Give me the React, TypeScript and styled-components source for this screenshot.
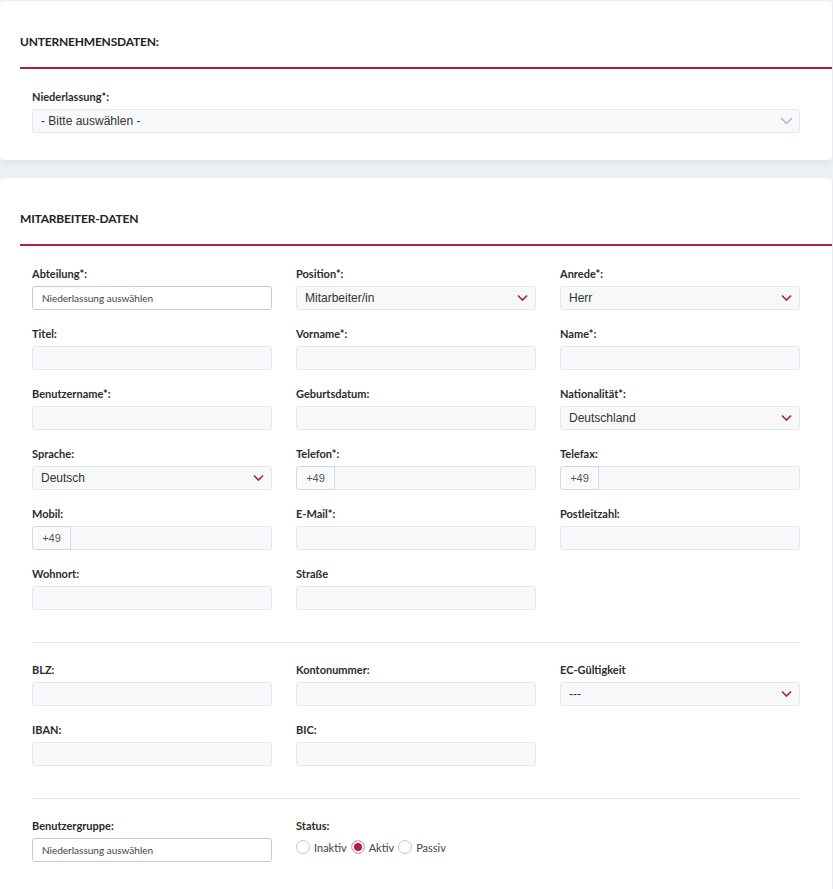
import React from "react";
import styled, { createGlobalStyle } from "styled-components";

const Global = createGlobalStyle`
  html, body {
    margin: 0;
    padding: 0;
    background: #eef1f6;
  }
  body {
    font-family: Lato, "Noto Sans", sans-serif;
    color: #2b2b2b;
  }
  * { box-sizing: border-box; }
`;

const Page = styled.div`
  padding: 1px 1px 0 0;
  display: flex;
  flex-direction: column;
  gap: 18px;
`;

const Card = styled.section<{ $open?: boolean }>`
  background: #fff;
  border-radius: 4px;
  box-shadow: 0 4px 8px rgba(40, 50, 80, 0.07);
  padding-bottom: ${(p) => (p.$open ? "40px" : "27px")};
`;

const Header = styled.header`
  margin-left: 20px;
  padding-top: 33px;
  border-bottom: 2px solid #ad1f47;
  > h2 {
    margin: 0 0 17px;
    font-size: 12px;
    line-height: 16px;
    font-weight: 700;
    letter-spacing: -0.2px;
    color: #222;
  }
`;

const Body = styled.div<{ $top: number }>`
  padding: ${(p) => p.$top}px 32px 0;
`;

const Grid = styled.div<{ $cols: number }>`
  display: grid;
  grid-template-columns: repeat(${(p) => p.$cols}, 1fr);
  column-gap: 24px;
  row-gap: 17px;
`;

const Divider = styled.hr`
  border: none;
  border-top: 1px solid #e3e6ea;
  margin: 32px 0 20px;
`;

const Field = styled.div`
  display: flex;
  flex-direction: column;
  min-width: 0;
`;

const Label = styled.label`
  font-size: 11px;
  line-height: 14px;
  font-weight: 700;
  color: #2b2b2b;
  margin-bottom: 5px;
  white-space: nowrap;
`;

const TextInput = styled.input<{ $plain?: boolean }>`
  height: 24px;
  width: 100%;
  border-radius: 3px;
  border: 1px solid ${(p) => (p.$plain ? "#c6cbd3" : "#e4e7ec")};
  background: ${(p) => (p.$plain ? "#fff" : "#f7f8fa")};
  padding: 0 9px;
  font-family: Lato, "Noto Sans", sans-serif;
  font-size: 10px;
  color: #444;
  outline: none;
  &::placeholder { color: #444; }
`;

const SelectWrap = styled.div`
  position: relative;
  > svg {
    position: absolute;
    top: 50%;
    transform: translateY(-50%);
    pointer-events: none;
  }
`;

const Select = styled.select`
  appearance: none;
  -webkit-appearance: none;
  height: 24px;
  width: 100%;
  border-radius: 3px;
  border: 1px solid #e4e7ec;
  background: #f7f8fa;
  padding: 0 28px 0 8px;
  font-family: "Liberation Sans", Arial, sans-serif;
  font-size: 12px;
  color: #333;
  outline: none;
`;

const Group = styled.div`
  display: flex;
  height: 24px;
`;

const Addon = styled.span`
  flex: 0 0 39px;
  display: flex;
  align-items: center;
  justify-content: center;
  border: 1px solid #d5d9e0;
  border-radius: 3px 0 0 3px;
  background: #f9fafb;
  font-family: "Liberation Sans", Arial, sans-serif;
  font-size: 11px;
  color: #555;
`;

const GroupInput = styled(TextInput)`
  border-left: none;
  border-radius: 0 3px 3px 0;
`;

const Radios = styled.div`
  display: flex;
  align-items: center;
  gap: 4px;
  height: 20px;
  margin-top: -1px;
`;

const Radio = styled.label<{ $on?: boolean }>`
  display: flex;
  align-items: center;
  gap: 4px;
  font-size: 11px;
  color: #444;
  > span {
    width: 14px;
    height: 14px;
    border-radius: 50%;
    border: 1px solid #c3c8d0;
    background: ${(p) => (p.$on ? "#b01e4a" : "#fff")};
    box-shadow: ${(p) => (p.$on ? "inset 0 0 0 2px #fff" : "none")};
  }
`;

const Chevron = ({ red }: { red?: boolean }) =>
  red ? (
    <svg width="11" height="7" viewBox="0 0 11 7" style={{ right: 8 }}>
      <path d="M1 1l4.5 4.5L10 1" fill="none" stroke="#b01e4a" strokeWidth="1.6" />
    </svg>
  ) : (
    <svg width="13" height="8" viewBox="0 0 13 8" style={{ right: 7 }}>
      <path d="M1 1l5.5 5.5L12 1" fill="none" stroke="#a7acb3" strokeWidth="1.1" />
    </svg>
  );

type F =
  | { kind: "text"; label: string }
  | { kind: "plain"; label: string; placeholder: string }
  | { kind: "select"; label: string; value: string }
  | { kind: "phone"; label: string }
  | { kind: "empty" };

const row = (f: F, i: number) => {
  if (f.kind === "empty") return <div key={i} />;
  return (
    <Field key={i}>
      <Label>{f.label}</Label>
      {f.kind === "text" && <TextInput />}
      {f.kind === "plain" && <TextInput $plain placeholder={f.placeholder} />}
      {f.kind === "select" && (
        <SelectWrap>
          <Select defaultValue={f.value}>
            <option>{f.value}</option>
          </Select>
          <Chevron red />
        </SelectWrap>
      )}
      {f.kind === "phone" && (
        <Group>
          <Addon>+49</Addon>
          <GroupInput />
        </Group>
      )}
    </Field>
  );
};

const personal: F[] = [
  { kind: "plain", label: "Abteilung*:", placeholder: "Niederlassung auswählen" },
  { kind: "select", label: "Position*:", value: "Mitarbeiter/in" },
  { kind: "select", label: "Anrede*:", value: "Herr" },
  { kind: "text", label: "Titel:" },
  { kind: "text", label: "Vorname*:" },
  { kind: "text", label: "Name*:" },
  { kind: "text", label: "Benutzername*:" },
  { kind: "text", label: "Geburtsdatum:" },
  { kind: "select", label: "Nationalität*:", value: "Deutschland" },
  { kind: "select", label: "Sprache:", value: "Deutsch" },
  { kind: "phone", label: "Telefon*:" },
  { kind: "phone", label: "Telefax:" },
  { kind: "phone", label: "Mobil:" },
  { kind: "text", label: "E-Mail*:" },
  { kind: "text", label: "Postleitzahl:" },
  { kind: "text", label: "Wohnort:" },
  { kind: "text", label: "Straße" },
  { kind: "empty" },
];

const bank: F[] = [
  { kind: "text", label: "BLZ:" },
  { kind: "text", label: "Kontonummer:" },
  { kind: "select", label: "EC-Gültigkeit", value: "---" },
  { kind: "text", label: "IBAN:" },
  { kind: "text", label: "BIC:" },
  { kind: "empty" },
];

export default function App() {
  return (
    <Page>
      <Global />
      <Card>
        <Header>
          <h2>UNTERNEHMENSDATEN:</h2>
        </Header>
        <Body $top={21}>
          <Field>
            <Label>Niederlassung*:</Label>
            <SelectWrap>
              <Select defaultValue="- Bitte auswählen -">
                <option>- Bitte auswählen -</option>
              </Select>
              <Chevron />
            </SelectWrap>
          </Field>
        </Body>
      </Card>
      <Card $open>
        <Header>
          <h2>MITARBEITER-DATEN</h2>
        </Header>
        <Body $top={21}>
          <Grid $cols={3}>{personal.map(row)}</Grid>
          <Divider />
          <Grid $cols={3}>{bank.map(row)}</Grid>
          <Divider />
          <Grid $cols={3}>
            {row({ kind: "plain", label: "Benutzergruppe:", placeholder: "Niederlassung auswählen" }, 0)}
            <Field>
              <Label>Status:</Label>
              <Radios>
                <Radio><span />Inaktiv</Radio>
                <Radio $on><span />Aktiv</Radio>
                <Radio><span />Passiv</Radio>
              </Radios>
            </Field>
            <div />
          </Grid>
        </Body>
      </Card>
    </Page>
  );
}
